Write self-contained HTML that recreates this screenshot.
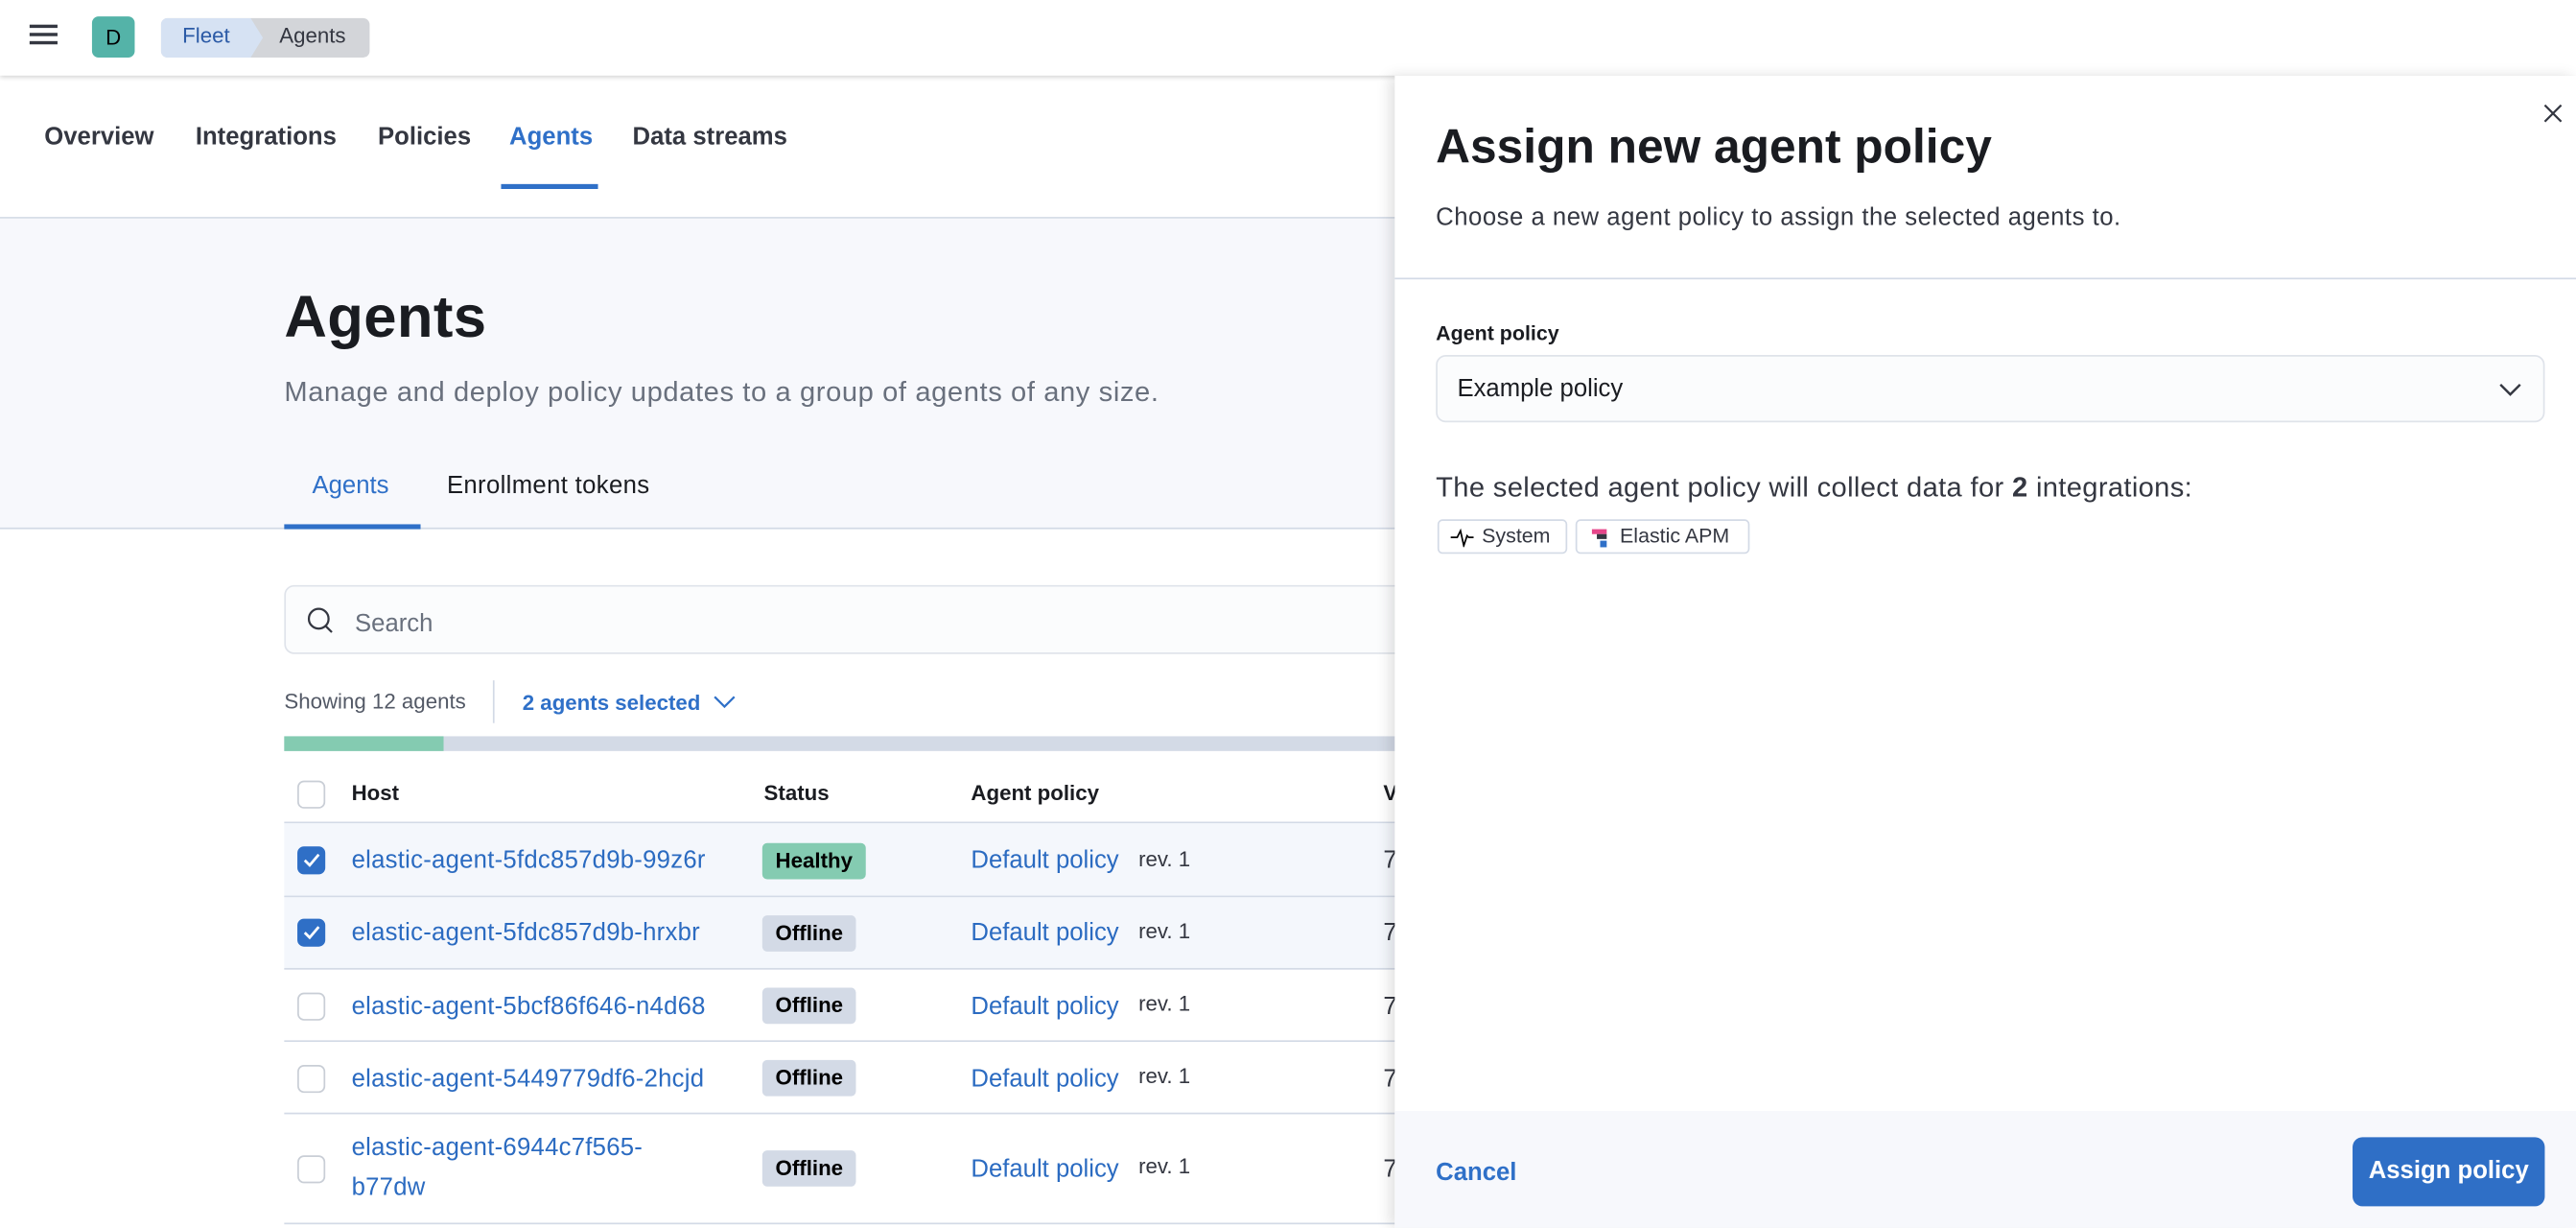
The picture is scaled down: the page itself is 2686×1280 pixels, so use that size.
<!DOCTYPE html>
<html><head><meta charset="utf-8"><style>
*{box-sizing:border-box;margin:0;padding:0}
html,body{width:2686px;height:1280px;overflow:hidden;background:#fff}
#s{position:absolute;left:0;top:0;width:1568px;height:747px;transform:scale(1.71301);transform-origin:0 0;font-family:"Liberation Sans",sans-serif;color:#343741}
.a{position:absolute;white-space:nowrap}
.blue{color:#2b6bc1}
.cb{position:absolute;width:17px;height:17px;border:1px solid #c9ced6;border-radius:4px;background:#fff}
.cb.on{background:#2f6fc6;border-color:#2f6fc6}
.row{position:absolute;left:173px;width:676px;border-bottom:1px solid #d3dae6}
.bd{position:absolute;height:22px;border-radius:3px;font-size:13px;font-weight:bold;padding:0 8px;line-height:22px;color:#000}
.t{font-size:15px}
</style></head><body><div id="s">
<!-- header -->
<div class="a" style="left:0;top:0;width:1568px;height:46px;background:#fff;box-shadow:0 1px 3px rgba(0,0,0,.2);z-index:2"></div>
<div class="a" style="left:18px;top:15px;width:17px;height:2px;background:#343741;z-index:3;box-shadow:0 5px 0 #343741,0 10px 0 #343741"></div>
<div class="a" style="left:56px;top:10px;width:26px;height:25px;background:#54b3a8;border-radius:4px;z-index:3;text-align:center;line-height:25px;font-size:13px;color:#000">D</div>
<div class="a" style="left:98px;top:11px;width:127px;height:24px;background:#d3d5d9;border-radius:4px;z-index:3"></div>
<div class="a" style="left:98px;top:11px;width:62px;height:24px;background:#d6e2f3;border-radius:4px 0 0 4px;clip-path:polygon(0 0,88% 0,100% 50%,88% 100%,0 100%);z-index:3"></div>
<div class="a" style="left:111px;top:14px;font-size:13px;color:#2b5aa6;z-index:3">Fleet</div>
<div class="a" style="left:170px;top:14px;font-size:13px;color:#343741;z-index:3">Agents</div>
<!-- tabs -->
<div class="a" style="left:0;top:132px;width:849px;height:1px;background:#d3dae6"></div>
<div class="a t" style="left:27px;top:75px;font-weight:bold">Overview</div>
<div class="a t" style="left:119px;top:75px;font-weight:bold">Integrations</div>
<div class="a t" style="left:230px;top:75px;font-weight:bold">Policies</div>
<div class="a t blue" style="left:310px;top:75px;font-weight:bold;color:#2f70c8">Agents</div>
<div class="a t" style="left:385px;top:75px;font-weight:bold">Data streams</div>
<div class="a" style="left:305px;top:112px;width:59px;height:3px;background:#2f70c8"></div>
<!-- page header -->
<div class="a" style="left:0;top:133px;width:849px;height:189px;background:#f7f8fc;border-bottom:1px solid #d3dae6"></div>
<div class="a" style="left:173px;top:172px;font-size:36px;font-weight:bold;color:#1a1c21;letter-spacing:0.2px">Agents</div>
<div class="a" style="left:173px;top:229px;font-size:17px;color:#69707d;letter-spacing:0.35px">Manage and deploy policy updates to a group of agents of any size.</div>
<div class="a t blue" style="left:190px;top:287px;color:#2f70c8">Agents</div>
<div class="a t" style="left:272px;top:287px;color:#1a1c21;letter-spacing:0.2px">Enrollment tokens</div>
<div class="a" style="left:173px;top:319px;width:83px;height:3px;background:#2f70c8"></div>
<!-- search -->
<div class="a" style="left:173px;top:356px;width:700px;height:42px;background:#fbfcfd;border:1px solid #dfe3ea;border-radius:6px"></div>
<svg class="a" style="left:186px;top:369px" width="18" height="18" viewBox="0 0 18 18"><circle cx="8" cy="7.5" r="6" fill="none" stroke="#343741" stroke-width="1.3"/><path d="M12.3 12 L16 15.7" stroke="#343741" stroke-width="1.3"/></svg>
<div class="a" style="left:216px;top:371px;font-size:15px;color:#69707d">Search</div>
<div class="a" style="left:173px;top:419px;font-size:13px;color:#535966">Showing 12 agents</div>
<div class="a" style="left:300px;top:414px;width:1px;height:26px;background:#d3dae6"></div>
<div class="a blue" style="left:318px;top:420px;font-size:13px;font-weight:bold;color:#2f70c8">2 agents selected</div>
<svg class="a" style="left:434px;top:422px" width="14" height="10"><path d="M1 2 L7 8 L13 2" fill="none" stroke="#2f70c8" stroke-width="1.3"/></svg>
<div class="a" style="left:173px;top:448px;width:676px;height:9px;background:#d3dae6"></div>
<div class="a" style="left:173px;top:448px;width:97px;height:9px;background:#84cbb1"></div>
<!-- table -->
<div class="row" style="top:466px;height:35px;border-bottom:1px solid #d3dae6"></div>
<div class="cb" style="left:181px;top:475px"></div>
<div class="a" style="left:214px;top:475px;font-size:13px;font-weight:bold;color:#1a1c21">Host</div>
<div class="a" style="left:465px;top:475px;font-size:13px;font-weight:bold;color:#1a1c21">Status</div>
<div class="a" style="left:591px;top:475px;font-size:13px;font-weight:bold;color:#1a1c21">Agent policy</div>
<div class="a" style="left:842px;top:475px;font-size:13px;font-weight:bold;color:#1a1c21">V</div>

<div class="row" style="top:501px;height:45px;background:#f4f7fc"></div>
<div class="row" style="top:546px;height:44px;background:#f4f7fc"></div>
<div class="row" style="top:590px;height:44px"></div>
<div class="row" style="top:634px;height:44px"></div>
<div class="row" style="top:678px;height:67px"></div>

<div class="cb on" style="left:181px;top:515px"><svg width="15" height="15" style="position:absolute;left:0;top:0"><path d="M3.5 7.5 L6.5 10.5 L12 4" fill="none" stroke="#fff" stroke-width="1.6"/></svg></div>
<div class="cb on" style="left:181px;top:559px"><svg width="15" height="15" style="position:absolute;left:0;top:0"><path d="M3.5 7.5 L6.5 10.5 L12 4" fill="none" stroke="#fff" stroke-width="1.6"/></svg></div>
<div class="cb" style="left:181px;top:604px"></div>
<div class="cb" style="left:181px;top:648px"></div>
<div class="cb" style="left:181px;top:703px"></div>

<div class="a t blue" style="left:214px;top:515px;letter-spacing:0.15px">elastic-agent-5fdc857d9b-99z6r</div>
<div class="a t blue" style="left:214px;top:559px;letter-spacing:0.15px">elastic-agent-5fdc857d9b-hrxbr</div>
<div class="a t blue" style="left:214px;top:604px;letter-spacing:0.15px">elastic-agent-5bcf86f646-n4d68</div>
<div class="a t blue" style="left:214px;top:648px;letter-spacing:0.15px">elastic-agent-5449779df6-2hcjd</div>
<div class="a t blue" style="left:214px;top:687px;line-height:24px;letter-spacing:0.15px">elastic-agent-6944c7f565-<br>b77dw</div>

<div class="bd" style="left:464px;top:513px;background:#84cbb1">Healthy</div>
<div class="bd" style="left:464px;top:557px;background:#d3dae6">Offline</div>
<div class="bd" style="left:464px;top:601px;background:#d3dae6">Offline</div>
<div class="bd" style="left:464px;top:645px;background:#d3dae6">Offline</div>
<div class="bd" style="left:464px;top:700px;background:#d3dae6">Offline</div>

<div class="a t blue" style="left:591px;top:515px">Default policy</div><div class="a" style="left:693px;top:515px;font-size:13px">rev. 1</div>
<div class="a t blue" style="left:591px;top:559px">Default policy</div><div class="a" style="left:693px;top:559px;font-size:13px">rev. 1</div>
<div class="a t blue" style="left:591px;top:604px">Default policy</div><div class="a" style="left:693px;top:603px;font-size:13px">rev. 1</div>
<div class="a t blue" style="left:591px;top:648px">Default policy</div><div class="a" style="left:693px;top:647px;font-size:13px">rev. 1</div>
<div class="a t blue" style="left:591px;top:703px">Default policy</div><div class="a" style="left:693px;top:702px;font-size:13px">rev. 1</div>
<div class="a t" style="left:842px;top:515px">7</div><div class="a t" style="left:842px;top:559px">7</div><div class="a t" style="left:842px;top:604px">7</div><div class="a t" style="left:842px;top:648px">7</div><div class="a t" style="left:842px;top:703px">7</div>

<!-- flyout -->
<div class="a" style="left:849px;top:46px;width:719px;height:701px;background:#fff;box-shadow:-3px 0 8px rgba(0,0,0,.12);z-index:4">
 <svg class="a" style="left:699px;top:17px" width="12" height="12"><path d="M1 1 L11 11 M11 1 L1 11" stroke="#343741" stroke-width="1.3"/></svg>
 <div class="a" style="left:25px;top:28px;font-size:29px;font-weight:bold;color:#1a1c21">Assign new agent policy</div>
 <div class="a" style="left:25px;top:78px;font-size:15px;letter-spacing:0.3px">Choose a new agent policy to assign the selected agents to.</div>
 <div class="a" style="left:0;top:123px;width:719px;height:1px;background:#d3dae6"></div>
 <div class="a" style="left:25px;top:150px;font-size:12.5px;font-weight:bold;color:#1a1c21">Agent policy</div>
 <div class="a" style="left:25px;top:170px;width:675px;height:41px;background:#fbfcfd;border:1px solid #dfe3ea;border-radius:6px"></div>
 <div class="a" style="left:38px;top:182px;font-size:15px;color:#1a1c21">Example policy</div>
 <svg class="a" style="left:672px;top:186px" width="14" height="10"><path d="M1 2 L7 8 L13 2" fill="none" stroke="#343741" stroke-width="1.4"/></svg>
 <div class="a" style="left:25px;top:241px;font-size:17px;letter-spacing:0.2px">The selected agent policy will collect data for <b>2</b> integrations:</div>
 <div class="a" style="left:26px;top:270px;width:79px;height:21px;border:1px solid #d3dae6;border-radius:3px;font-size:12.5px;line-height:19px;padding-left:26px">System</div>
 <svg class="a" style="left:34px;top:275px" width="14" height="12"><path d="M0 6 H4 L6 2 L8 11 L10 5 L11 6 H14" fill="none" stroke="#000" stroke-width="1"/></svg>
 <div class="a" style="left:110px;top:270px;width:106px;height:21px;border:1px solid #d3dae6;border-radius:3px;font-size:12.5px;line-height:19px;padding-left:26px">Elastic APM</div>
 <div class="a" style="left:120px;top:276px;width:9px;height:3px;background:#e6468a"></div>
 <div class="a" style="left:123px;top:279px;width:6px;height:3px;background:#343741"></div>
 <div class="a" style="left:125px;top:283px;width:4px;height:4px;background:#2f70c8"></div>
 <div class="a" style="left:0;top:630px;width:719px;height:71px;background:#f7f8fc"></div>
 <div class="a" style="left:25px;top:659px;font-size:15px;font-weight:bold;color:#2f70c8">Cancel</div>
 <div class="a" style="left:583px;top:646px;width:117px;height:42px;background:#2f6fc6;border-radius:6px;color:#fff;font-size:15px;font-weight:bold;text-align:center;line-height:42px">Assign policy</div>
</div>
</div></body></html>
